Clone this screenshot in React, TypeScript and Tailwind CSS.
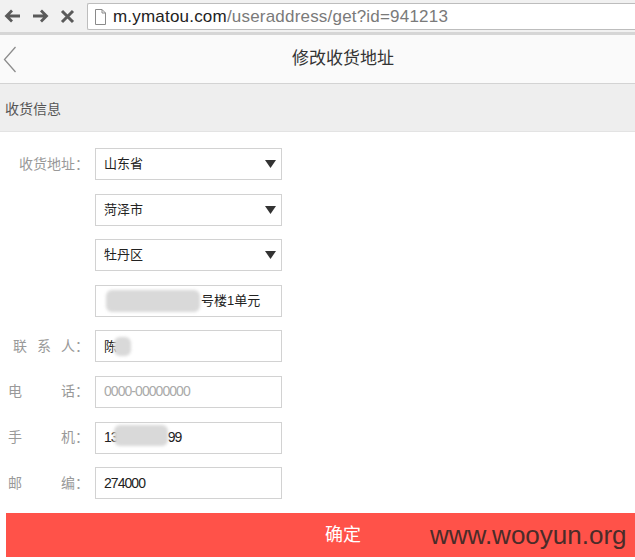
import React from 'react'

const cjk = "font-['Liberation_Sans','Noto_Sans_CJK_SC',sans-serif]"
const digits = "font-['Liberation_Sans',sans-serif] text-[14px] tracking-[-0.95px]"

function Caret() {
  return (
    <svg width="11" height="8" viewBox="0 0 11 8" className="shrink-0">
      <path d="M0 0 H11 L5.5 8 Z" fill="#333" />
    </svg>
  )
}

function Blob({ className }: { className: string }) {
  return <span className={`inline-block bg-[#d9d9d9] blur-[1.5px] rounded-[6px] ${className}`} />
}

function Field({
  label,
  children,
}: {
  label: React.ReactNode
  children: React.ReactNode
}) {
  return (
    <div className="flex items-center h-[32px]">
      <div className="w-[95px] shrink-0 flex justify-end pr-[6px] text-[14px] text-[#999]">{label}</div>
      <div className="w-[187px] h-[32px] border border-[#d2d2d2] bg-white flex items-center pl-[8px] pr-[5px] text-[13px] text-[#222]">
        {children}
      </div>
    </div>
  )
}

function Spread({ width, parts }: { width: number; parts: string[] }) {
  return (
    <span className="flex justify-between" style={{ width }}>
      {parts.map((p, i) => (
        <span key={i}>{p}</span>
      ))}
    </span>
  )
}

export default function App() {
  return (
    <div className={`w-[635px] h-[560px] overflow-hidden bg-white ${cjk}`}>
      {/* browser toolbar */}
      <div className="h-[35px] bg-[#f1f1f1] border-b-[3px] border-[#d6d6d6] flex items-center">
        <div className="flex items-center gap-[11px] pl-[4px] w-[87px]">
          <svg width="17" height="16" viewBox="0 0 17 16">
            <path d="M16 8 H3 M8 2.5 L2.5 8 L8 13.5" stroke="#5a5a5a" strokeWidth="2.8" fill="none" />
          </svg>
          <svg width="17" height="16" viewBox="0 0 17 16">
            <path d="M1 8 H14 M9 2.5 L14.5 8 L9 13.5" stroke="#5a5a5a" strokeWidth="2.8" fill="none" />
          </svg>
          <svg width="15" height="15" viewBox="0 0 15 15">
            <path d="M2 2 L13 13 M13 2 L2 13" stroke="#5a5a5a" strokeWidth="3" fill="none" />
          </svg>
        </div>
        <div className="flex-1 h-[27px] mt-[1px] bg-white border border-[#bdbdbd] border-r-0 rounded-l-[2px] flex items-center pl-[7px]">
          <svg width="11" height="16" viewBox="0 0 11 16" className="mr-[7px]">
            <path d="M0.5 0.5 H7 L10.5 4 V15.5 H0.5 Z M7 0.5 V4 H10.5" stroke="#8a8a8a" fill="#fff" />
          </svg>
          <span className="text-[17px] font-['Liberation_Sans',sans-serif] tracking-[0.2px]">
            <span className="text-[#222]">m.ymatou.com</span>
            <span className="text-[#7a7a7a]">/useraddress/get?id=941213</span>
          </span>
        </div>
      </div>

      <div className="w-[686px]">
        {/* header */}
        <div className="h-[49px] bg-[#fafafa] border-b border-[#d3d3d3] flex items-center relative">
          <svg width="14" height="28" viewBox="0 0 14 28" className="absolute left-[3px] top-[11px]">
            <path d="M12.5 1 L1.5 13.5 L12.5 26" stroke="#8c8c8c" strokeWidth="1.3" fill="none" />
          </svg>
          <div className="flex-1 text-center text-[17px] text-[#333]">修改收货地址</div>
        </div>

        {/* section */}
        <div className="h-[48px] bg-[#eeeeee] border-b border-[#e3e3e3] flex items-center pl-[5px] pt-[3px] text-[14px] text-[#555]">
          收货信息
        </div>

        {/* form */}
        <div className="flex flex-col gap-[13.6px] pt-[16px]">
          <Field label={<span>收货地址：</span>}>
            <span className="flex-1">山东省</span>
            <Caret />
          </Field>
          <Field label={null}>
            <span className="flex-1">菏泽市</span>
            <Caret />
          </Field>
          <Field label={null}>
            <span className="flex-1">牡丹区</span>
            <Caret />
          </Field>
          <Field label={null}>
            <span className="flex items-center">
              <span className="w-[2px]" />
              <Blob className="w-[94px] h-[22px]" />
              <span className="ml-[1px]">号楼1单元</span>
            </span>
          </Field>
          <Field label={<Spread width={76} parts={['联', '系', '人：']} />}>
            <span>陈</span>
            <Blob className="w-[17px] h-[19px] ml-[-3px]" />
          </Field>
          <Field label={<Spread width={81} parts={['电', '话：']} />}>
            <span className={`text-[#aaa] ${digits}`}>0000-00000000</span>
          </Field>
          <Field label={<Spread width={81} parts={['手', '机：']} />}>
            <span className={digits}>13</span>
            <Blob className="w-[54px] h-[21px] mt-[-4px] ml-[-4px]" />
            <span className={digits}>99</span>
          </Field>
          <Field label={<Spread width={81} parts={['邮', '编：']} />}>
            <span className={digits}>274000</span>
          </Field>
        </div>

        {/* submit */}
        <div className="mx-[6px] mt-[14px] h-[44px] bg-[#ff5249] flex items-center justify-center text-[18px] text-white relative">
          确定
          <span className="absolute left-[424px] top-[3px] text-[26px] text-[#4a2c29] font-['Liberation_Sans',sans-serif]">
            www.wooyun.org
          </span>
        </div>
      </div>
    </div>
  )
}
